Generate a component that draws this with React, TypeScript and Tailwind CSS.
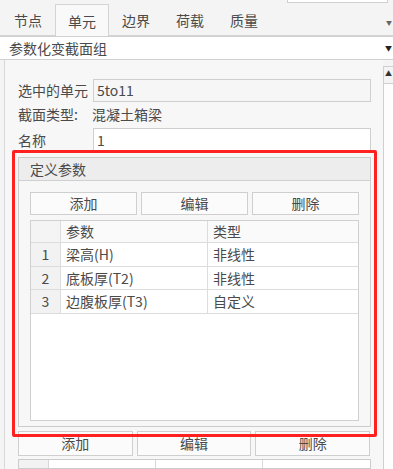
const tabs = ['节点', '单元', '边界', '荷载', '质量']

const params = [
  { no: 1, name: '梁高(H)', kind: '非线性' },
  { no: 2, name: '底板厚(T2)', kind: '非线性' },
  { no: 3, name: '边腹板厚(T3)', kind: '自定义' },
]

function Btn({ label, className = '' }: { label: string; className?: string }) {
  return (
    <div className={`h-[23px] flex items-center justify-center border border-[#cfcfcf] bg-[#fbfbfb] ${className}`}>
      {label}
    </div>
  )
}

export default function App() {
  return (
    <div
      className="w-[393px] h-[469px] overflow-hidden bg-[#f4f4f4] text-[14px] text-[#4a4a4a] relative"
      style={{ fontFamily: '"Noto Sans CJK SC", "Noto Sans", sans-serif' }}
    >
      {/* leftover box from the panel above */}
      <div className="h-[5px] flex justify-end pr-[5px]">
        <div className="w-[101px] h-[3px] border-x border-b border-[#cfcfcf] bg-white" />
      </div>

      {/* tab strip */}
      <div className="h-[31px] flex items-end border-b border-[#d4d4d4] pl-[1px] relative">
        {tabs.map(t => (
          <div
            key={t}
            className={`w-[54px] flex items-center justify-center leading-none ${t === '单元' ? 'h-[32px] bg-[#f9f9f9] border-x border-t border-[#d4d4d4] -mb-px' : 'h-[31px]'}`}
          >
            {t}
          </div>
        ))}
        <span className="absolute right-[1px] top-[13px] text-[6px] text-[#666]">▼</span>
      </div>

      {/* group dropdown */}
      <div className="h-[24px] bg-white border-y border-[#d0d0d0] flex items-center pl-[9px] pr-[1px] justify-between">
        <span>参数化变截面组</span>
        <span className="text-[7px] text-[#222]">▼</span>
      </div>

      {/* panel */}
      <div className="flex h-[409px]">
        <div className="w-[5px] border-r border-[#d8d8d8]" />
        <div className="w-[378px] bg-[#f7f7f7] pt-[19px] pl-[13px] pr-[12px] flex flex-col">
          <div className="flex items-center h-[23px]">
            <span className="w-[75px] whitespace-nowrap">选中的单元</span>
            <div className="flex-1 h-[23px] border border-[#cfcfcf] bg-[#f6f6f6] flex items-center pl-[3px]">5to11</div>
          </div>
          <div className="flex items-center h-[24px] mt-[1px]">
            <span className="w-[74px] whitespace-nowrap">截面类型:</span>
            <span>混凝土箱梁</span>
          </div>
          <div className="flex items-center h-[24px] mt-[2px]">
            <span className="w-[75px]">名称</span>
            <div className="flex-1 h-[24px] border border-[#cfcfcf] bg-white flex items-center pl-[3px]">1</div>
          </div>

          {/* 定义参数 group */}
          <div className="mt-[5px] h-[276px] border border-[#cccccc] flex flex-col">
            <div className="h-[23px] bg-[#ededed] border-b border-[#d0d0d0] flex items-center pl-[11px]">定义参数</div>
            <div className="px-[11px] pt-[11px] flex flex-col">
              <div className="flex gap-[4px]">
                <Btn label="添加" className="flex-1" />
                <Btn label="编辑" className="flex-1" />
                <Btn label="删除" className="flex-1" />
              </div>
              <div className="mt-[5px] h-[201px] border border-[#d0d0d0] bg-white">
                <div className="flex h-[22px] border-b border-[#dcdcdc] bg-[#fafafa]">
                  <div className="w-[30px] border-r border-[#dcdcdc] bg-[#f4f4f4]" />
                  <div className="w-[147px] border-r border-[#dcdcdc] pl-[5px] flex items-center">参数</div>
                  <div className="flex-1 pl-[5px] flex items-center">类型</div>
                </div>
                {params.map(p => (
                  <div key={p.no} className="flex h-[23.5px] border-b border-[#dcdcdc]">
                    <div className="w-[30px] border-r border-[#dcdcdc] bg-[#f2f2f2] flex items-center justify-center">{p.no}</div>
                    <div className="w-[147px] border-r border-[#dcdcdc] pl-[5px] flex items-center whitespace-nowrap">{p.name}</div>
                    <div className="flex-1 pl-[5px] flex items-center">{p.kind}</div>
                  </div>
                ))}
              </div>
            </div>
          </div>

          <div className="flex gap-[4px] mt-[4px] pr-[1px]">
            <Btn label="添加" className="flex-1 h-[25px]" />
            <Btn label="编辑" className="flex-1 h-[25px]" />
            <Btn label="删除" className="flex-1 h-[25px]" />
          </div>

          <div className="mt-[3px] h-[10px] border border-[#cccccc] bg-white flex">
            <div className="w-[30px] border-r border-[#d8d8d8] bg-[#f2f2f2]" />
            <div className="w-[107px] border-r border-[#d8d8d8]" />
            <div className="w-[107px] border-r border-[#d8d8d8]" />
            <div className="flex-1" />
          </div>
        </div>

        {/* scroll bar */}
        <div className="w-[10px] pt-[6px] flex flex-col">
          <div className="h-[17px] border-l border-t border-[#cfcfcf] bg-[#f4f4f4] flex items-start justify-center pt-[3px] text-[7px] text-[#333] leading-none">▲</div>
          <div className="flex-1 border-l border-t border-[#cfcfcf] bg-[#fdfdfd]" />
        </div>
      </div>

      {/* red highlight annotation */}
      <div className="absolute left-[12px] top-[150px] w-[365px] h-[287px] border-[3px] border-[#ff2020] rounded-[2px] pointer-events-none" />
    </div>
  )
}
